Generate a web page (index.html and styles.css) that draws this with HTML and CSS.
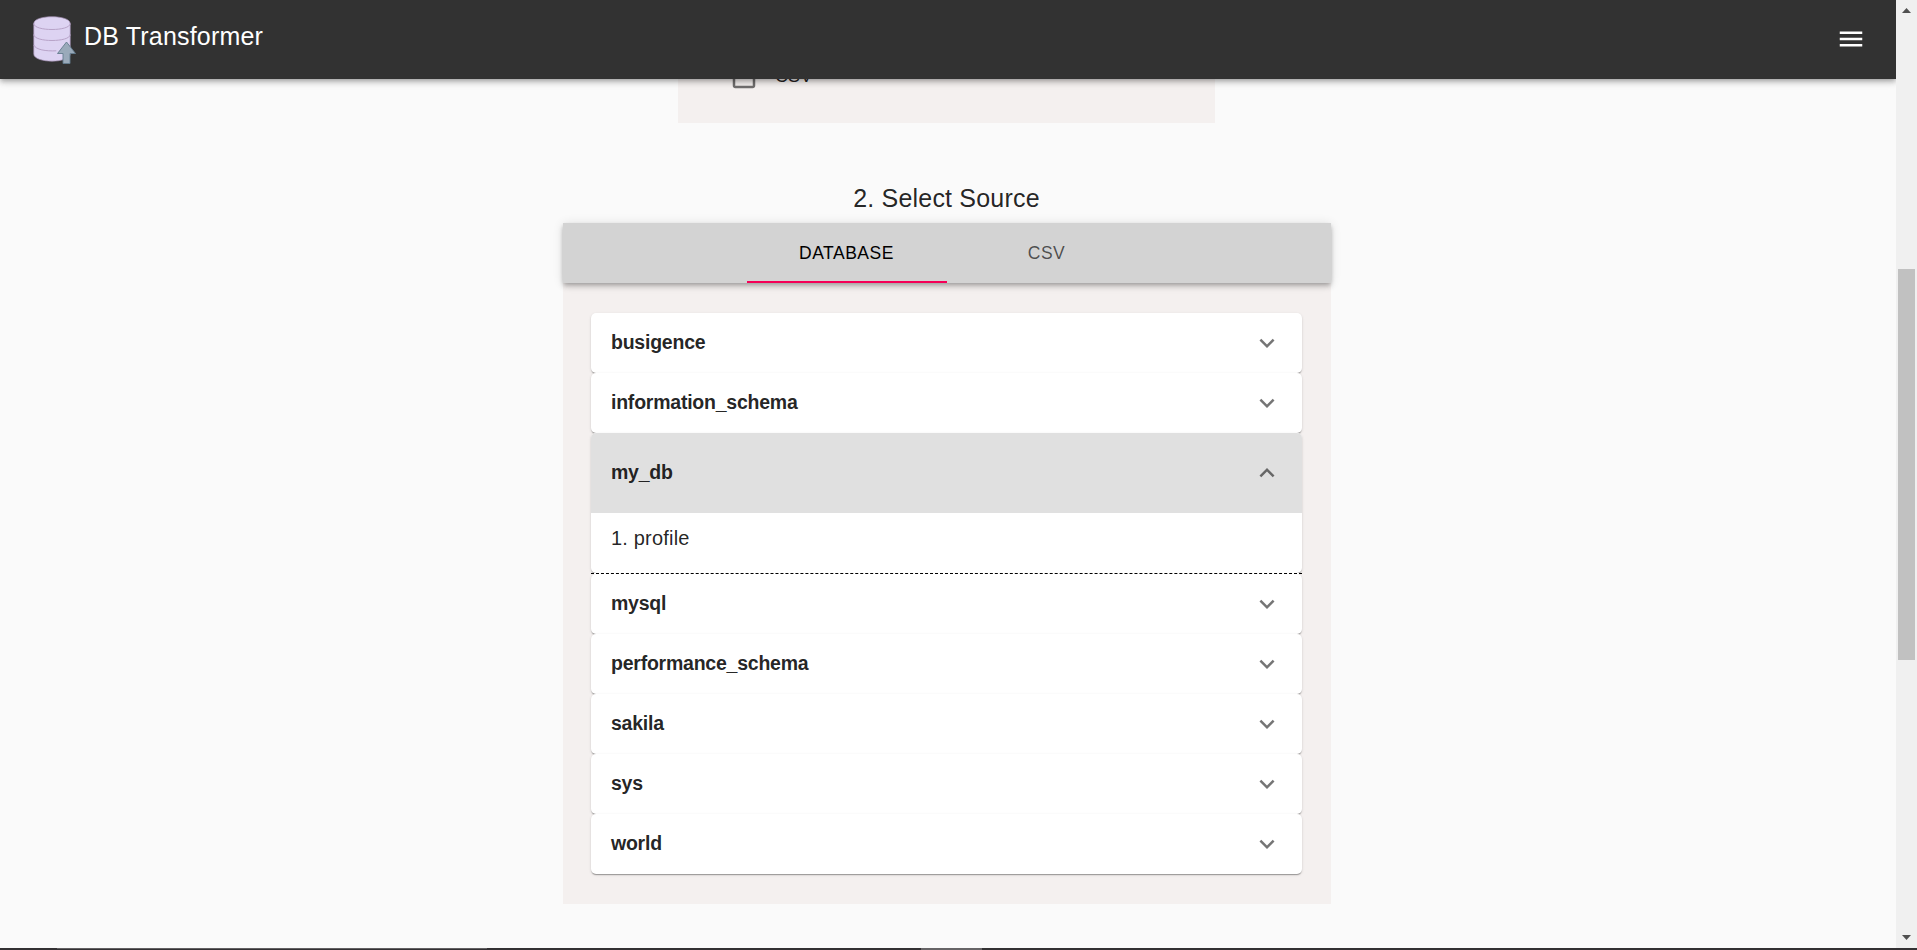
FILE: index.html
```html
<!DOCTYPE html>
<html lang="en">
<head>
<meta charset="utf-8">
<title>DB Transformer</title>
<link rel="stylesheet" href="styles.css">
</head>
<body>
<svg class="defs" aria-hidden="true">
  <symbol id="more" viewBox="0 0 24 24"><path d="M16.59 8.59L12 13.17 7.41 8.59 6 10l6 6 6-6z"/></symbol>
</svg>
<div class="window">
  <div class="viewport">
    <header class="appbar">
      <svg class="logo" viewBox="0 0 44 48">
        <path d="M.8 7.500C.8-1.500 37.200-1.500 37.200 7.500V38c0 9.500-36.400 9.500-36.400 0z" fill="#ddd3f2" stroke="#a793b8" stroke-width=".7"/>
        <path d="M.8 7.500c0 8 36.400 8 36.400 0M.8 18.500c0 8 36.400 8 36.400 0M.8 29c2 4.800 12 6.300 22.500 5.800" fill="none" stroke="#b8a3c8" stroke-width="1"/>
        <path d="M33.500 26l9 11.500h-5.500V47.500h-7V37.500h-5.500z" fill="#9aaaba" stroke="#647d8e" stroke-width=".9"/>
      </svg>
      <h1 class="brand">DB Transformer</h1>
      <svg class="menu" viewBox="0 0 24 24"><path d="M3 18h18v-2H3v2zm0-5h18v-2H3v2zm0-7v2h18V6H3z"/></svg>
    </header>
    <main class="content">
      <section class="options">
        <svg class="checkbox" viewBox="0 0 24 24"><path d="M19 5v14H5V5h14m0-2H5c-1.100 0-2 .9-2 2v14c0 1.100.9 2 2 2h14c1.100 0 2-.9 2-2V5c0-1.100-.9-2-2-2z"/></svg>
        <span class="option-label">CSV</span>
      </section>
      <h2 class="step">2. Select Source</h2>
      <section class="source">
        <nav class="tabs">
          <div class="tab active">DATABASE</div>
          <div class="tab">CSV</div>
        </nav>
        <div class="list">
          <div class="item"><div class="summary"><span>busigence</span><svg class="chevron"><use href="#more"/></svg></div></div>
          <div class="item"><div class="summary"><span>information_schema</span><svg class="chevron"><use href="#more"/></svg></div></div>
          <div class="item open"><div class="summary"><span>my_db</span><svg class="chevron"><use href="#more"/></svg></div><div class="details">1. profile</div></div>
          <div class="divider"></div>
          <div class="item"><div class="summary"><span>mysql</span><svg class="chevron"><use href="#more"/></svg></div></div>
          <div class="item"><div class="summary"><span>performance_schema</span><svg class="chevron"><use href="#more"/></svg></div></div>
          <div class="item"><div class="summary"><span>sakila</span><svg class="chevron"><use href="#more"/></svg></div></div>
          <div class="item"><div class="summary"><span>sys</span><svg class="chevron"><use href="#more"/></svg></div></div>
          <div class="item"><div class="summary"><span>world</span><svg class="chevron"><use href="#more"/></svg></div></div>
        </div>
      </section>
    </main>
  </div>
  <aside class="scrollbar">
    <svg class="arrow" viewBox="0 0 9 5"><path d="M0 5L4.500 0 9 5z"/></svg>
    <div class="thumb"></div>
    <svg class="arrow end" viewBox="0 0 9 5"><path d="M0 0L4.500 5 9 0z"/></svg>
  </aside>
</div>
<footer class="taskbar"><div class="search"></div><div class="running"></div></footer>
</body>
</html>
```
FILE: styles.css
```css
* { box-sizing: border-box; }
body {
  margin: 0;
  height: 950px;
  overflow: hidden;
  background: #fafafa;
  color: rgba(0, 0, 0, .87);
  font-family: "Liberation Sans", Arial, sans-serif;
}
.defs { display: none; }
.window { display: flex; height: 948px; }
.viewport { width: 1896px; overflow: hidden; }
.appbar {
  position: relative;
  z-index: 2;
  display: flex;
  align-items: flex-start;
  height: 79px;
  padding: 16px 30px 0 33px;
  background: #323232;
  color: #fff;
  box-shadow: 0 2px 4px -1px rgba(0,0,0,.2), 0 4px 5px 0 rgba(0,0,0,.14), 0 1px 10px 0 rgba(0,0,0,.12);
}
.logo { width: 44px; height: 48px; }
.brand { margin: 0 auto 0 7px; font-size: 25px; font-weight: 400; line-height: 40px; letter-spacing: .19px; }
.menu { width: 30px; height: 30px; margin-top: 8px; fill: #fff; }
.content { display: flex; flex-direction: column; align-items: center; padding-right: 2px; }
.options {
  display: flex;
  align-items: flex-start;
  width: 537px;
  height: 62px;
  margin: -18px 0 0 -1px;
  padding: 1px 0 0 51px;
  background: #f4f0ef;
}
.checkbox { width: 30px; height: 30px; fill: rgba(0,0,0,.54); }
.option-label { margin: 3px 0 0 16px; font-size: 18px; line-height: 22px; letter-spacing: .1px; }
.step { margin: 60px 1px 0 0; font-size: 25px; font-weight: 400; line-height: 30px; letter-spacing: .19px; }
.source { width: 768px; height: 681px; margin-top: 10px; background: #f4f0ef; }
.tabs {
  display: flex;
  justify-content: center;
  height: 60px;
  background: #d3d3d3;
  box-shadow: 0 2px 4px -1px rgba(0,0,0,.2), 0 4px 5px 0 rgba(0,0,0,.14), 0 1px 10px 0 rgba(0,0,0,.12);
}
.tab {
  width: 200px;
  height: 60px;
  padding-right: 1px;
  font-size: 17.5px;
  line-height: 60px;
  letter-spacing: .5px;
  text-align: center;
  color: rgba(0,0,0,.65);
}
.tab.active { color: #000; border-bottom: 2px solid #f50057; }
.list { padding: 30px 29px 0 28px; }
.item {
  position: relative;
  background: #fff;
  border-radius: 5px;
  box-shadow: 0 2px 1px -1px rgba(0,0,0,.2), 0 1px 1px 0 rgba(0,0,0,.14), 0 1px 3px 0 rgba(0,0,0,.12);
}
.summary {
  display: flex;
  align-items: center;
  justify-content: space-between;
  height: 60px;
  padding: 0 20px;
  font-size: 19.5px;
  font-weight: 700;
  letter-spacing: -.23px;
}
.summary span { padding-bottom: 2px; }
.chevron { width: 30px; height: 30px; fill: rgba(0,0,0,.54); }
.open .summary { height: 80px; background: #e0e0e0; border-radius: 5px 5px 0 0; }
.open .chevron { transform: rotate(180deg); }
.details { height: 60px; padding: 10px 20px; font-size: 20px; line-height: 30px; letter-spacing: .19px; }
.divider { position: relative; z-index: 1; height: 1px; background: #fff; border-top: 1px dashed #000; }
.scrollbar {
  display: flex;
  flex-direction: column;
  align-items: center;
  width: 21px;
  padding: 8px 0;
  background: #f0f0f0;
}
.arrow { width: 9px; height: 5px; fill: #505050; }
.thumb { width: 17px; height: 391px; margin-top: 256px; background: #c1c1c1; }
.end { margin-top: auto; }
.taskbar { display: flex; height: 2px; background: #333133; }
.search { width: 430px; height: 1px; margin-left: 57px; background: #626062; }
.running { width: 61px; height: 2px; margin-left: 434px; background: #666466; }
```
